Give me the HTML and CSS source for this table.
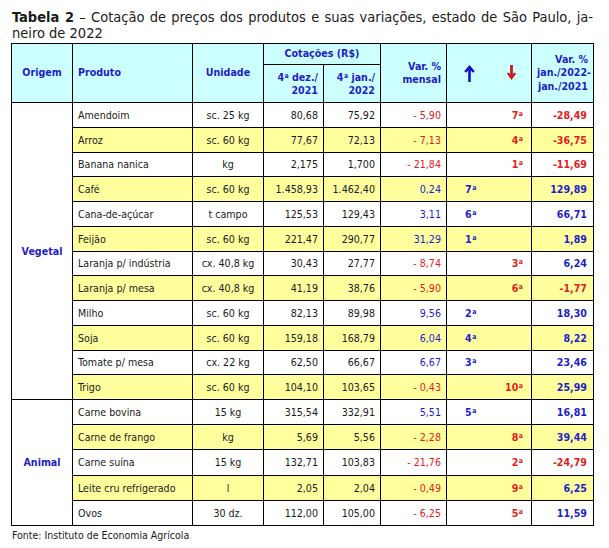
FILE: index.html
```html
<!DOCTYPE html>
<html lang="pt">
<head>
<meta charset="utf-8">
<link rel="stylesheet" href="styles.css">
</head>
<body>
<div class="page">
  <div class="title">
    <span class="line1"><b>Tabela 2</b> – Cotação de preços dos produtos e suas variações, estado de São Paulo, ja-</span>
    <span class="line2">neiro de 2022</span>
  </div>
  <table class="tbl">
    <colgroup>
      <col class="c-orig"><col class="c-prod"><col class="c-unid"><col class="c-dez"><col class="c-jan"><col class="c-var"><col class="c-up"><col class="c-down"><col class="c-ano">
    </colgroup>
    <thead>
      <tr class="h1">
        <th rowspan="2" class="center">Origem</th>
        <th rowspan="2" class="left">Produto</th>
        <th rowspan="2" class="center">Unidade</th>
        <th colspan="2" class="center">Cotações (R$)</th>
        <th rowspan="2" class="right">Var. %<br>mensal</th>
        <th rowspan="2" colspan="2" class="arrows">
          <div class="arrowbox">
            <svg width="11" height="17" viewBox="0 0 11 17"><path d="M5.5 17V2.5M1.2 7L5.5 2L9.8 7" fill="none" stroke="#1010c8" stroke-width="2.6"/></svg>
            <svg width="11" height="16" viewBox="0 0 11 16"><path d="M5.5 0V13" stroke="#cc1a1a" stroke-width="2.8" fill="none"/><path d="M0.8 8.5L5.5 15L10.2 8.5L8.2 7.6L5.5 11.2L2.8 7.6Z" fill="#cc1a1a"/></svg>
          </div>
        </th>
        <th rowspan="2" class="right">Var. %<br>jan./2022-<br>jan./2021</th>
      </tr>
      <tr class="h2">
        <th class="right">4<span class="o">a</span> dez./<br>2021</th>
        <th class="right">4<span class="o">a</span> jan./<br>2022</th>
      </tr>
    </thead>
    <tbody class="veg">
      <tr><td rowspan="12" class="orig">Vegetal</td><td class="prod">Amendoim</td><td class="unid">sc. 25 kg</td><td class="num">80,68</td><td class="num">75,92</td><td class="num red">- 5,90</td><td class="up"></td><td class="down red">7<span class="o">a</span></td><td class="tot red">-28,49</td></tr>
      <tr class="y"><td class="prod">Arroz</td><td class="unid">sc. 60 kg</td><td class="num">77,67</td><td class="num">72,13</td><td class="num red">- 7,13</td><td class="up"></td><td class="down red">4<span class="o">a</span></td><td class="tot red">-36,75</td></tr>
      <tr><td class="prod">Banana nanica</td><td class="unid">kg</td><td class="num">2,175</td><td class="num">1,700</td><td class="num red">- 21,84</td><td class="up"></td><td class="down red">1<span class="o">a</span></td><td class="tot red">-11,69</td></tr>
      <tr class="y"><td class="prod">Café</td><td class="unid">sc. 60 kg</td><td class="num">1.458,93</td><td class="num">1.462,40</td><td class="num blue">0,24</td><td class="up blue">7<span class="o">a</span></td><td class="down"></td><td class="tot blue">129,89</td></tr>
      <tr><td class="prod">Cana-de-açúcar</td><td class="unid">t campo</td><td class="num">125,53</td><td class="num">129,43</td><td class="num blue">3,11</td><td class="up blue">6<span class="o">a</span></td><td class="down"></td><td class="tot blue">66,71</td></tr>
      <tr class="y"><td class="prod">Feijão</td><td class="unid">sc. 60 kg</td><td class="num">221,47</td><td class="num">290,77</td><td class="num blue">31,29</td><td class="up blue">1<span class="o">a</span></td><td class="down"></td><td class="tot blue">1,89</td></tr>
      <tr><td class="prod">Laranja p/ indústria</td><td class="unid">cx. 40,8 kg</td><td class="num">30,43</td><td class="num">27,77</td><td class="num red">- 8,74</td><td class="up"></td><td class="down red">3<span class="o">a</span></td><td class="tot blue">6,24</td></tr>
      <tr class="y"><td class="prod">Laranja p/ mesa</td><td class="unid">cx. 40,8 kg</td><td class="num">41,19</td><td class="num">38,76</td><td class="num red">- 5,90</td><td class="up"></td><td class="down red">6<span class="o">a</span></td><td class="tot red">-1,77</td></tr>
      <tr><td class="prod">Milho</td><td class="unid">sc. 60 kg</td><td class="num">82,13</td><td class="num">89,98</td><td class="num blue">9,56</td><td class="up blue">2<span class="o">a</span></td><td class="down"></td><td class="tot blue">18,30</td></tr>
      <tr class="y"><td class="prod">Soja</td><td class="unid">sc. 60 kg</td><td class="num">159,18</td><td class="num">168,79</td><td class="num blue">6,04</td><td class="up blue">4<span class="o">a</span></td><td class="down"></td><td class="tot blue">8,22</td></tr>
      <tr><td class="prod">Tomate p/ mesa</td><td class="unid">cx. 22 kg</td><td class="num">62,50</td><td class="num">66,67</td><td class="num blue">6,67</td><td class="up blue">3<span class="o">a</span></td><td class="down"></td><td class="tot blue">23,46</td></tr>
      <tr class="y"><td class="prod">Trigo</td><td class="unid">sc. 60 kg</td><td class="num">104,10</td><td class="num">103,65</td><td class="num red">- 0,43</td><td class="up"></td><td class="down red">10<span class="o">a</span></td><td class="tot blue">25,99</td></tr>
    </tbody>
    <tbody class="ani">
      <tr><td rowspan="5" class="orig">Animal</td><td class="prod">Carne bovina</td><td class="unid">15 kg</td><td class="num">315,54</td><td class="num">332,91</td><td class="num blue">5,51</td><td class="up blue">5<span class="o">a</span></td><td class="down"></td><td class="tot blue">16,81</td></tr>
      <tr class="y"><td class="prod">Carne de frango</td><td class="unid">kg</td><td class="num">5,69</td><td class="num">5,56</td><td class="num red">- 2,28</td><td class="up"></td><td class="down red">8<span class="o">a</span></td><td class="tot blue">39,44</td></tr>
      <tr><td class="prod">Carne suína</td><td class="unid">15 kg</td><td class="num">132,71</td><td class="num">103,83</td><td class="num red">- 21,76</td><td class="up"></td><td class="down red">2<span class="o">a</span></td><td class="tot red">-24,79</td></tr>
      <tr class="y"><td class="prod">Leite cru refrigerado</td><td class="unid">l</td><td class="num">2,05</td><td class="num">2,04</td><td class="num red">- 0,49</td><td class="up"></td><td class="down red">9<span class="o">a</span></td><td class="tot blue">6,25</td></tr>
      <tr><td class="prod">Ovos</td><td class="unid">30 dz.</td><td class="num">112,00</td><td class="num">105,00</td><td class="num red">- 6,25</td><td class="up"></td><td class="down red">5<span class="o">a</span></td><td class="tot blue">11,59</td></tr>
    </tbody>
  </table>
  <p class="source">Fonte: Instituto de Economia Agrícola</p>
</div>
</body>
</html>
```

FILE: styles.css
```css
html, body {
  margin: 0;
  padding: 0;
  background: #ffffff;
}

.page {
  padding: 9px 0 0 11px;
  font-family: "DejaVu Sans Condensed", "DejaVu Sans", sans-serif;
  font-stretch: condensed;
  color: #1a1a1a;
}

.title {
  margin: 0 0 2px 1px;
  width: 581px;
  font-size: 14.5px;
  line-height: 16px;
  color: #1a1a1a;
}

.title .line1,
.title .line2 {
  display: block;
}

.title .line1 {
  text-align: justify;
  text-align-last: justify;
}

.title b {
  font-weight: bold;
}

.tbl {
  border-collapse: collapse;
  table-layout: fixed;
  width: 583px;
  font-size: 10.6px;
}

.c-orig { width: 61px; }
.c-prod { width: 120px; }
.c-unid { width: 71px; }
.c-dez { width: 60px; }
.c-jan { width: 57px; }
.c-var { width: 66px; }
.c-up { width: 46px; }
.c-down { width: 39px; }
.c-ano { width: 62px; }

.tbl th,
.tbl td {
  border: 1px solid #000;
  padding: 0 5px;
  vertical-align: middle;
  white-space: nowrap;
}

.tbl th {
  background: #ccffff;
  color: #1e1ec4;
  font-weight: bold;
  line-height: 13.3px;
}

.h1 { height: 21px; }
.h2 { height: 38px; }

.center { text-align: center; }
.left { text-align: left; }
.right { text-align: right; }

.arrowbox {
  display: flex;
  justify-content: space-between;
  align-items: center;
  padding: 0 9px 0 12px;
}

.arrowbox svg {
  display: block;
}

.o {
  font-size: 0.65em;
  vertical-align: 0.45em;
  margin-left: 0.5px;
}

.veg tr { height: 24.75px; }
.ani tr { height: 25.2px; }

.y td { background: #ffff9e; }

.orig {
  text-align: center;
  color: #1e1ec4;
  font-weight: bold;
  background: #fff;
}

.prod { text-align: left; }
.unid { text-align: center; }
.num { text-align: right; }

.tbl td.tot {
  text-align: right;
  font-weight: bold;
  padding-right: 6px;
}

.tbl td.up {
  border-right: none;
  padding-left: 18px;
  text-align: left;
  font-weight: bold;
}

.tbl td.down {
  border-left: none;
  padding-right: 8px;
  text-align: right;
  font-weight: bold;
}

.red { color: #e3201c; }
.blue { color: #1e1ec8; }

.source {
  margin: 3px 0 0 1px;
  font-size: 10.5px;
  color: #1a1a1a;
}
```
